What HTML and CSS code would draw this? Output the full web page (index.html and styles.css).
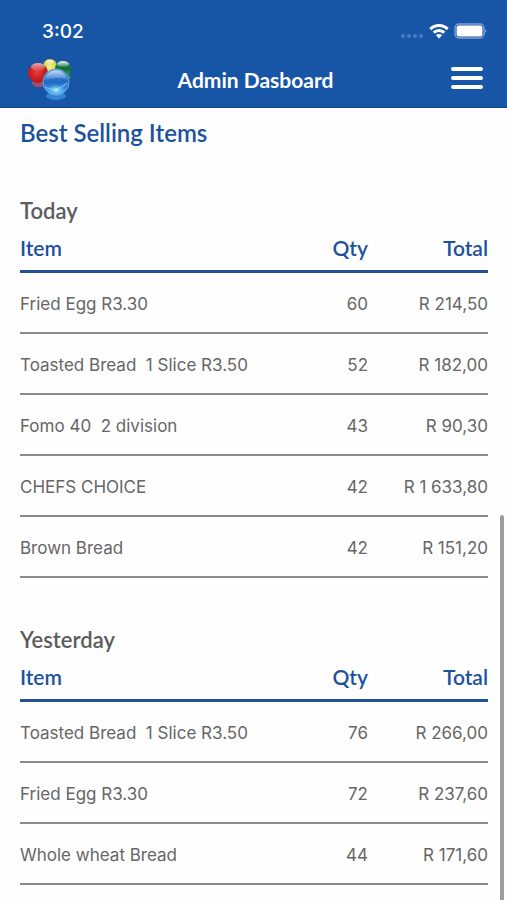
FILE: index.html
```
<!DOCTYPE html>
<html lang="en">
<head>
    <meta charset="UTF-8">
    <meta name="viewport" content="width=device-width, initial-scale=1.0">
    <title>Admin Dasboard</title>
    <link rel="stylesheet" href="styles.css">
</head>
<body>
    <header class="top">
        <div class="status">
            <span class="time">3:02</span>
            <div class="status-icons">
                <svg width="24" height="4" viewBox="0 0 24 4" fill="#4a7bc4">
                    <circle cx="3" cy="2" r="2"/>
                    <circle cx="9" cy="2" r="2"/>
                    <circle cx="15" cy="2" r="2"/>
                    <circle cx="21" cy="2" r="2"/>
                </svg>
                <svg class="wifi" width="20" height="16" viewBox="0 0 20 16" fill="none" stroke="#fff" stroke-width="3">
                    <path d="M1.3 6.1a12.4 12.4 0 0 1 17.4 0"/>
                    <path d="M4.7 9.7a7.6 7.6 0 0 1 10.6 0"/>
                    <path d="M10 15.6L6.9 12.3a4.4 4.4 0 0 1 6.2 0z" fill="#fff" stroke="none"/>
                </svg>
                <svg width="33" height="16" viewBox="0 0 33 16">
                    <rect x="1" y="1" width="29" height="14" rx="4" fill="none" stroke="#7fa3d8" stroke-width="1.4"/>
                    <rect x="2.6" y="2.6" width="25.8" height="10.8" rx="2" fill="#fff"/>
                    <path d="M31.3 6v4q1.2-.6 1.2-2t-1.2-2z" fill="#7fa3d8"/>
                </svg>
            </div>
        </div>
        <div class="navbar">
            <svg class="logo" width="46" height="44" viewBox="0 0 46 44" role="img" aria-label="Logo">
                <defs>
                    <radialGradient id="red" cx="45%" cy="45%" r="60%">
                        <stop offset="0" stop-color="#e8403c"/>
                        <stop offset="0.6" stop-color="#c91e22"/>
                        <stop offset="1" stop-color="#a31a28"/>
                    </radialGradient>
                    <radialGradient id="yellow" cx="50%" cy="55%" r="55%">
                        <stop offset="0" stop-color="#f7f08a"/>
                        <stop offset="1" stop-color="#c9cc3c"/>
                    </radialGradient>
                    <linearGradient id="green" x1="0" y1="0" x2="0" y2="1">
                        <stop offset="0" stop-color="#2f8f5a"/>
                        <stop offset="0.5" stop-color="#0f6a35"/>
                        <stop offset="1" stop-color="#4fae52"/>
                    </linearGradient>
                    <linearGradient id="blue" x1="0" y1="0" x2="0" y2="1">
                        <stop offset="0" stop-color="#4a8fdc"/>
                        <stop offset="0.5" stop-color="#2269c4"/>
                        <stop offset="1" stop-color="#48aef0"/>
                    </linearGradient>
                    <linearGradient id="shine" x1="0" y1="0" x2="0" y2="1">
                        <stop offset="0" stop-color="#fff" stop-opacity="0.9"/>
                        <stop offset="1" stop-color="#fff" stop-opacity="0.1"/>
                    </linearGradient>
                    <radialGradient id="glow">
                        <stop offset="0" stop-color="#c4f2ff"/>
                        <stop offset="1" stop-color="#4fb4f0" stop-opacity="0"/>
                    </radialGradient>
                </defs>
                <ellipse cx="11" cy="25" rx="7" ry="4" fill="#c2505c" opacity="0.8"/>
                <ellipse cx="36" cy="19" rx="7" ry="4" fill="#3f8d62" opacity="0.7"/>
                <ellipse cx="28" cy="38" rx="10" ry="4" fill="#3b8ede" opacity="0.8"/>
                <circle cx="22" cy="8" r="7" fill="url(#yellow)"/>
                <ellipse cx="22" cy="4" rx="4" ry="2" fill="url(#shine)"/>
                <circle cx="35" cy="11" r="8" fill="url(#green)"/>
                <ellipse cx="35" cy="6" rx="6" ry="3" fill="url(#shine)"/>
                <circle cx="10" cy="15" r="10" fill="url(#red)"/>
                <ellipse cx="10" cy="9" rx="7" ry="4" fill="url(#shine)" opacity="0.7"/>
                <circle cx="28" cy="24" r="13" fill="url(#blue)" stroke="#6ba8e6" stroke-width="1"/>
                <path d="M17 22c1-13 21-13 22 0c-7-4-13-1-22 0z" fill="url(#shine)" opacity="0.75"/>
                <path d="M17 29q11 6 22-4" fill="none" stroke="#75b4ec" stroke-width="1.2"/>
                <ellipse cx="28" cy="32" rx="10" ry="6" fill="url(#glow)"/>
            </svg>
            <h1>Admin Dasboard</h1>
            <button class="menu" type="button" aria-label="Menu">
                <span></span>
                <span></span>
                <span></span>
            </button>
        </div>
    </header>

    <main>
        <h2>Best Selling Items</h2>

        <section>
            <h3 id="today">Today</h3>
            <table aria-labelledby="today">
                <thead>
                    <tr>
                        <th>Item</th>
                        <th class="qty">Qty</th>
                        <th class="total">Total</th>
                    </tr>
                </thead>
                <tbody>
                    <tr>
                        <td>Fried Egg R3.30</td>
                        <td class="qty">60</td>
                        <td class="total">R 214,50</td>
                    </tr>
                    <tr>
                        <td>Toasted Bread&nbsp; 1 Slice R3.50</td>
                        <td class="qty">52</td>
                        <td class="total">R 182,00</td>
                    </tr>
                    <tr>
                        <td>Fomo 40&nbsp; 2 division</td>
                        <td class="qty">43</td>
                        <td class="total">R 90,30</td>
                    </tr>
                    <tr>
                        <td>CHEFS CHOICE</td>
                        <td class="qty">42</td>
                        <td class="total">R 1 633,80</td>
                    </tr>
                    <tr>
                        <td>Brown Bread</td>
                        <td class="qty">42</td>
                        <td class="total">R 151,20</td>
                    </tr>
                </tbody>
            </table>
        </section>

        <section>
            <h3 id="yesterday">Yesterday</h3>
            <table aria-labelledby="yesterday">
                <thead>
                    <tr>
                        <th>Item</th>
                        <th class="qty">Qty</th>
                        <th class="total">Total</th>
                    </tr>
                </thead>
                <tbody>
                    <tr>
                        <td>Toasted Bread&nbsp; 1 Slice R3.50</td>
                        <td class="qty">76</td>
                        <td class="total">R 266,00</td>
                    </tr>
                    <tr>
                        <td>Fried Egg R3.30</td>
                        <td class="qty">72</td>
                        <td class="total">R 237,60</td>
                    </tr>
                    <tr>
                        <td>Whole wheat Bread</td>
                        <td class="qty">44</td>
                        <td class="total">R 171,60</td>
                    </tr>
                </tbody>
            </table>
        </section>
    </main>
    <div class="scroll-thumb"></div>
</body>
</html>
```
FILE: styles.css
```
* {
    box-sizing: border-box;
}
body {
    margin: 0;
    background-color: #fefefe;
    color: #666;
    font-family: Inter, "Liberation Sans", sans-serif;
    font-size: 17px;
}
h1, h2, h3, th {
    font-family: Lato, "Open Sans", sans-serif;
    font-weight: 600;
}
.top {
    background-color: #1755a6;
    color: #fff;
    padding: 18px 20px 3px;
    border-bottom: 1px solid #14468c;
}
.status {
    display: flex;
    justify-content: space-between;
    align-items: center;
    height: 26px;
    padding-left: 22px;
}
.time {
    font-size: 19px;
    font-weight: 500;
}
.status-icons {
    display: flex;
    align-items: center;
    gap: 5px;
}
.status-icons svg:first-child {
    margin-top: 10px;
}
.navbar {
    display: grid;
    grid-template-columns: 1fr auto 1fr;
    align-items: center;
    height: 60px;
    padding: 0 4px 0 8px;
}
.navbar h1 {
    margin: 0;
    font-size: 21px;
    font-weight: 700;
    line-height: 24px;
    padding-top: 12px;
}
.menu {
    justify-self: end;
    display: flex;
    flex-direction: column;
    gap: 5px;
    margin-top: 7px;
    padding: 0;
    border: none;
    background: none;
    cursor: pointer;
}
.logo {
    margin-top: 11px;
}
.menu span {
    width: 32px;
    height: 4px;
    border-radius: 2px;
    background-color: #fff;
}
main {
    padding: 10px 19px 0 20px;
}
h2 {
    margin: 0 0 49px;
    color: #1c529d;
    font-size: 24px;
    line-height: 30px;
}
h3 {
    margin: 0;
    color: #5c5c5c;
    font-size: 22px;
    line-height: 28px;
}
section {
    margin-bottom: 48px;
}
section:last-child {
    margin-bottom: 0;
}
table {
    width: 100%;
    border-collapse: separate;
    border-spacing: 0;
    table-layout: fixed;
}
th {
    height: 48px;
    padding: 0;
    border-bottom: 3px solid #235396;
    color: #1c529d;
    font-size: 21px;
    text-align: left;
}
td {
    height: 61px;
    padding: 2px 0 0;
    border-bottom: 2px solid #8b8b8b;
}
.qty {
    width: 80px;
    text-align: right;
}
.total {
    width: 120px;
    text-align: right;
}
.scroll-thumb {
    position: fixed;
    top: 515px;
    right: 3px;
    bottom: 0;
    width: 4px;
    border-radius: 2px 2px 0 0;
    background-color: #9c9c9c;
}
```
